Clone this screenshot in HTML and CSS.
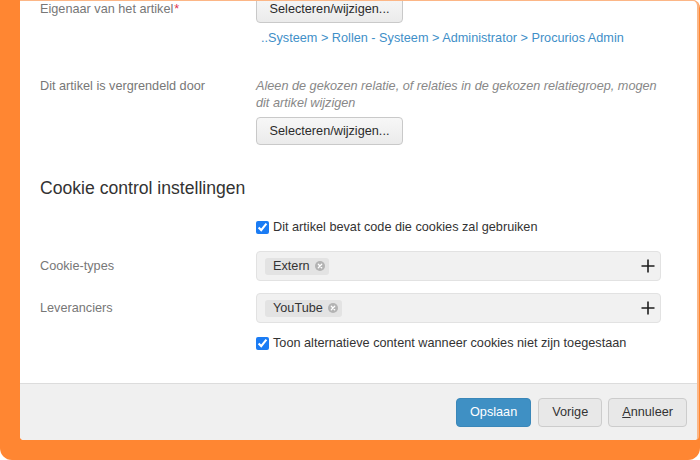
FILE: index.html
```html
<!DOCTYPE html>
<html lang="nl">
<head>
<meta charset="utf-8">
<title>Artikel</title>
<link rel="stylesheet" href="styles.css">
</head>
<body>
<div class="frame">
  <div class="dialog">
    <div class="content">
      <div class="row row-owner">
        <div class="label label-btn">Eigenaar van het artikel<span class="req">*</span></div>
        <div class="field">
          <button class="btn-select">Selecteren/wijzigen...</button>
        </div>
      </div>
      <div class="row row-crumb">
        <div></div>
        <div class="crumb">..Systeem &gt; Rollen - Systeem &gt; Administrator &gt; Procurios Admin</div>
      </div>
      <div class="row row-lock">
        <div class="label label-text">Dit artikel is vergrendeld door</div>
        <div class="field">
          <div class="hint">Aleen de gekozen relatie, of relaties in de gekozen relatiegroep, mogen dit artikel wijzigen</div>
          <button class="btn-select btn-lock">Selecteren/wijzigen...</button>
        </div>
      </div>
      <h2 class="heading">Cookie control instellingen</h2>
      <div class="row row-check1">
        <div></div>
        <label class="check"><input type="checkbox" checked><span>Dit artikel bevat code die cookies zal gebruiken</span></label>
      </div>
      <div class="row row-types">
        <div class="label label-input">Cookie-types</div>
        <div class="tagbox">
          <span class="tag">Extern<svg class="tag-x" viewBox="0 0 10 10" width="10" height="10"><circle cx="5" cy="5" r="5" fill="#b3b3b3"/><path d="M3.3 3.3 L6.7 6.7 M6.7 3.3 L3.3 6.7" stroke="#ffffff" stroke-width="1.3" stroke-linecap="round"/></svg></span>
          <svg class="plus" viewBox="0 0 14 14" width="14" height="14"><path d="M7 0.5 V13.5 M0.5 7 H13.5" stroke="#1e1e1e" stroke-width="1.6"/></svg>
        </div>
      </div>
      <div class="row row-vendors">
        <div class="label label-input">Leveranciers</div>
        <div class="tagbox">
          <span class="tag">YouTube<svg class="tag-x" viewBox="0 0 10 10" width="10" height="10"><circle cx="5" cy="5" r="5" fill="#b3b3b3"/><path d="M3.3 3.3 L6.7 6.7 M6.7 3.3 L3.3 6.7" stroke="#ffffff" stroke-width="1.3" stroke-linecap="round"/></svg></span>
          <svg class="plus" viewBox="0 0 14 14" width="14" height="14"><path d="M7 0.5 V13.5 M0.5 7 H13.5" stroke="#1e1e1e" stroke-width="1.6"/></svg>
        </div>
      </div>
      <div class="row row-check2">
        <div></div>
        <label class="check"><input type="checkbox" checked><span>Toon alternatieve content wanneer cookies niet zijn toegestaan</span></label>
      </div>
    </div>
    <div class="footer">
      <button class="btn btn-primary">Opslaan</button>
      <button class="btn">Vorige</button>
      <button class="btn"><u>A</u>nnuleer</button>
    </div>
  </div>
</div>
</body>
</html>
```

FILE: styles.css
```css
html, body {
  margin: 0;
  padding: 0;
  background: #ffffff;
}

body {
  font-family: "Liberation Sans", Arial, sans-serif;
  font-size: 12.7px;
  color: #333333;
}

.frame {
  width: 700px;
  height: 460px;
  box-sizing: border-box;
  background: #ff8632;
  border-radius: 0 8px 12px 12px;
  padding: 0 1px 20px 20px;
  display: flex;
}

.dialog {
  flex: 1;
  background: #ffffff;
  border-top: 1px solid #fcb686;
  border-right: 2px solid #fcb686;
  border-radius: 0 6px 4px 4px;
  display: flex;
  flex-direction: column;
  overflow: hidden;
}

.content {
  height: 382px;
  overflow: hidden;
  padding: 0 36px 0 20px;
  display: flex;
  flex-direction: column;
}

.row {
  display: grid;
  grid-template-columns: 216px 1fr;
  align-items: start;
}

.label {
  color: #777777;
}

.label-btn {
  line-height: 28px;
}

.label-text {
  line-height: 17px;
}

.label-input {
  line-height: 30px;
}

.req {
  color: #e0314b;
  margin-left: 1px;
}

.row-owner {
  margin-top: -6px;
}

.field {
  display: flex;
  flex-direction: column;
  align-items: flex-start;
}

.btn-select {
  height: 28px;
  padding: 0 12px;
  font-family: "Liberation Sans", Arial, sans-serif;
  font-size: 12.7px;
  color: #2b2b2b;
  background: linear-gradient(#f7f7f7, #ebebeb);
  border: 1px solid #c9c9c9;
  border-radius: 4px;
  width: 147px;
}

.row-crumb {
  margin-top: 6px;
}

.crumb {
  line-height: 18px;
  color: #3f8fc8;
  padding-left: 5px;
}

.row-lock {
  margin-top: 31px;
}

.hint {
  font-style: italic;
  color: #888888;
  line-height: 17px;
  margin-right: -4px;
}

.btn-lock {
  margin-top: 5px;
}

.heading {
  margin: 32px 0 0 0;
  font-size: 17.6px;
  font-weight: normal;
  line-height: 22px;
  color: #333333;
}

.row-check1 {
  margin-top: 19px;
}

.check {
  display: flex;
  align-items: center;
  line-height: 18px;
  color: #333333;
}

.check input {
  width: 13px;
  height: 13px;
  margin: 0 4px 0 0;
  accent-color: #1b7cf4;
}

.row-types {
  margin-top: 15px;
}

.row-vendors {
  margin-top: 12px;
}

.row-check2 {
  margin-top: 11px;
}

.tagbox {
  height: 30px;
  box-sizing: border-box;
  background: #f1f1f1;
  border: 1px solid #e2e2e2;
  border-radius: 4px;
  display: flex;
  align-items: center;
  padding: 0 5px 0 8px;
}

.tag {
  display: inline-flex;
  align-items: center;
  height: 17px;
  padding: 0 4px 0 8px;
  background: #e3e3e3;
  border-radius: 3px;
  color: #333333;
  line-height: 17px;
}

.tag-x {
  margin-left: 5px;
}

.plus {
  margin-left: auto;
}

.footer {
  flex: 1;
  background: #f0f0f0;
  border-top: 1px solid #dcdcdc;
  display: flex;
  justify-content: flex-end;
  align-items: center;
  gap: 6px;
  padding: 0 10px 0 0;
}

.btn {
  height: 29px;
  padding: 0 13px;
  font-family: "Liberation Sans", Arial, sans-serif;
  font-size: 12.7px;
  color: #333333;
  background: #e8e8e8;
  border: 1px solid #cccccc;
  border-radius: 4px;
}

.btn-primary {
  background: #3f90c4;
  border-color: #3a87b9;
  color: #ffffff;
  margin-right: 1px;
}
```
